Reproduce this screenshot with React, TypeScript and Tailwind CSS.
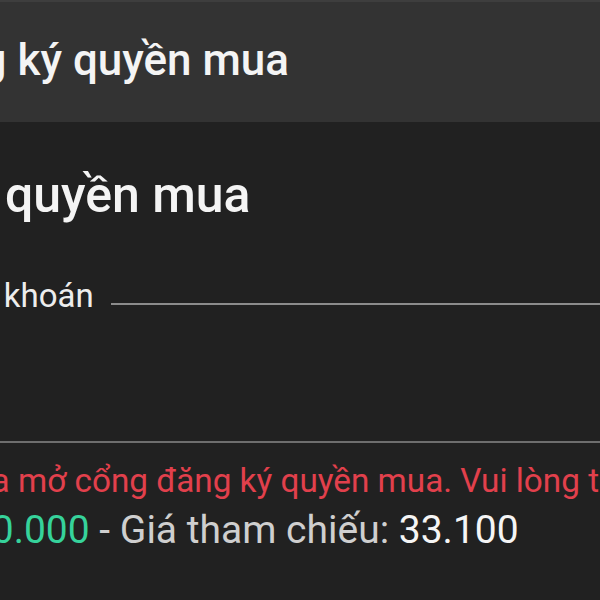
export default function App() {
  return (
    <div
      className="w-[600px] h-[600px] overflow-hidden bg-[#212121] flex flex-col"
      style={{ fontFamily: 'Roboto, "Noto Sans", sans-serif' }}
    >
      {/* thanh tiêu đề */}
      <header className="h-[122px] shrink-0 bg-[#333333] border-t-2 border-[#3e3e3e] pt-[36px] overflow-hidden">
        <h1 className="whitespace-nowrap -ml-[96px] text-[44px] leading-none font-medium text-[#f4f4f4]">
          Đăng ký quyền mua
        </h1>
      </header>

      <div className="flex flex-col">
        <h2 className="mt-[48px] whitespace-nowrap -ml-[187px] text-[50px] leading-none font-medium text-[#f4f4f4]">
          Đăng ký quyền mua
        </h2>

        <div className="mt-[59px] flex items-end">
          <span className="whitespace-nowrap -ml-[152px] text-[33px] leading-none text-[#ededed]">
            Mã chứng khoán
          </span>
          <div className="flex-1 ml-[17px] mb-[7px] h-[2px] bg-[#8c8c8c]" />
        </div>

        <div className="mt-[129px] h-[2px] bg-[#6e6e6e]" />

        <p className="mt-[21px] whitespace-nowrap -ml-[69px] text-[33.3px] leading-none text-[#e2404c]">
          Chưa mở cổng đăng ký quyền mua. Vui lòng thử lại sau.
        </p>

        <p className="mt-[14px] whitespace-nowrap -ml-[289px] text-[39px] leading-none text-[#cfcfcf]">
          Giá phát hành: 1<span className="text-[#36d39b]">0.000</span> - Giá tham chiếu:{' '}
          <span className="text-[#f5f5f5]">33.100</span>
        </p>
      </div>
    </div>
  );
}
